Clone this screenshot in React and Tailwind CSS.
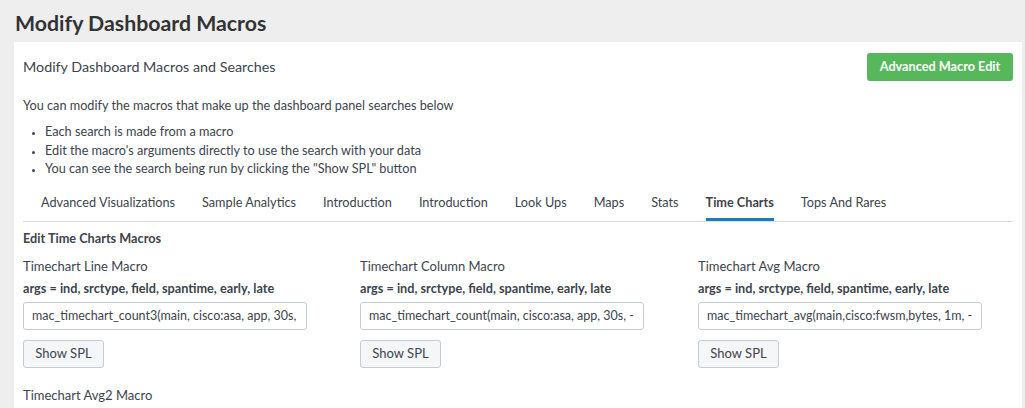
import { useState } from 'react';

const tabs = [
  'Advanced Visualizations',
  'Sample Analytics',
  'Introduction',
  'Introduction',
  'Look Ups',
  'Maps',
  'Stats',
  'Time Charts',
  'Tops And Rares',
];

const macros = [
  { title: 'Timechart Line Macro', value: 'mac_timechart_count3(main, cisco:asa, app, 30s, -15m, now)' },
  { title: 'Timechart Column Macro', value: 'mac_timechart_count(main, cisco:asa, app, 30s, -15m, now)' },
  { title: 'Timechart Avg Macro', value: 'mac_timechart_avg(main,cisco:fwsm,bytes, 1m, -1h, now)' },
  { title: 'Timechart Avg2 Macro', value: 'mac_timechart_avg2(main,cisco:fwsm,bytes, 1m, -1h, now)' },
];

function MacroField({ macro }) {
  const [value, setValue] = useState(macro.value);
  return (
    <div className="flex flex-col">
      <div className="h-[22px] leading-[22px] text-[13px]">{macro.title}</div>
      <div className="h-[22px] leading-[22px] text-[12.7px] font-bold">
        args = ind, srctype, field, spantime, early, late
      </div>
      <input
        value={value}
        onChange={(e) => setValue(e.target.value)}
        className="mt-[3px] h-[28px] w-[284px] rounded-[3px] border border-[#c3cbd4] bg-white px-[8px] text-[12.5px] text-[#3c444d] outline-none"
      />
      <div className="mt-[10px]">
        <button className="h-[28px] w-[81px] rounded-[3px] border border-[#c3cbd4] bg-[#f5f6f8] text-[13px] text-[#3c444d]">
          Show SPL
        </button>
      </div>
    </div>
  );
}

export default function App() {
  const [active, setActive] = useState(7);

  return (
    <div
      className="h-[408px] overflow-hidden bg-[#eeeeee] text-[#3c444d]"
      style={{ fontFamily: 'Lato, "Liberation Sans", sans-serif' }}
    >
      {/* Page title */}
      <div className="h-[42px] pl-[15px] pt-[9px]">
        <h1 className="text-[21.3px] font-bold leading-[28px] text-[#333]">Modify Dashboard Macros</h1>
      </div>

      {/* Panel */}
      <div className="ml-[14px] mr-[3px] h-[366px] bg-white px-[9px]">
        <div className="flex h-[46px] items-center justify-between pt-[4px]">
          <span className="text-[14.3px]">Modify Dashboard Macros and Searches</span>
          <button className="h-[28px] w-[146px] rounded-[3px] bg-[#56b85a] text-[12.7px] font-bold text-white">
            Advanced Macro Edit
          </button>
        </div>

        <p className="mt-[8px] text-[12.7px] leading-[18px]">
          You can modify the macros that make up the dashboard panel searches below
        </p>
        <ul className="mt-[8px] list-disc pl-[22px] text-[12.7px] leading-[18.5px] marker:text-[10px]">
          <li>Each search is made from a macro</li>
          <li>Edit the macro's arguments directly to use the search with your data</li>
          <li>You can see the search being run by clicking the "Show SPL" button</li>
        </ul>

        {/* Tabs */}
        <div className="mt-[7px] flex h-[37px] gap-[27px] border-b border-[#dddddd] pl-[18px]">
          {tabs.map((tab, i) => (
            <button
              key={i}
              onClick={() => setActive(i)}
              className={
                i === active
                  ? 'flex h-full items-center border-b-[3px] border-[#1a7dbf] pt-[3px] text-[12.7px] font-bold text-[#3c444d]'
                  : 'flex h-full items-center border-b-[3px] border-transparent pt-[3px] text-[12.7px] text-[#3c444d]'
              }
            >
              {tab}
            </button>
          ))}
        </div>

        <div className="mt-[6px] h-[20px] text-[12.7px] font-bold leading-[20px]">Edit Time Charts Macros</div>

        <div className="mt-[7px] grid grid-cols-[337px_338px_1fr] gap-y-[16px]">
          {macros.map((m) => (
            <MacroField key={m.title} macro={m} />
          ))}
        </div>
      </div>
    </div>
  );
}
